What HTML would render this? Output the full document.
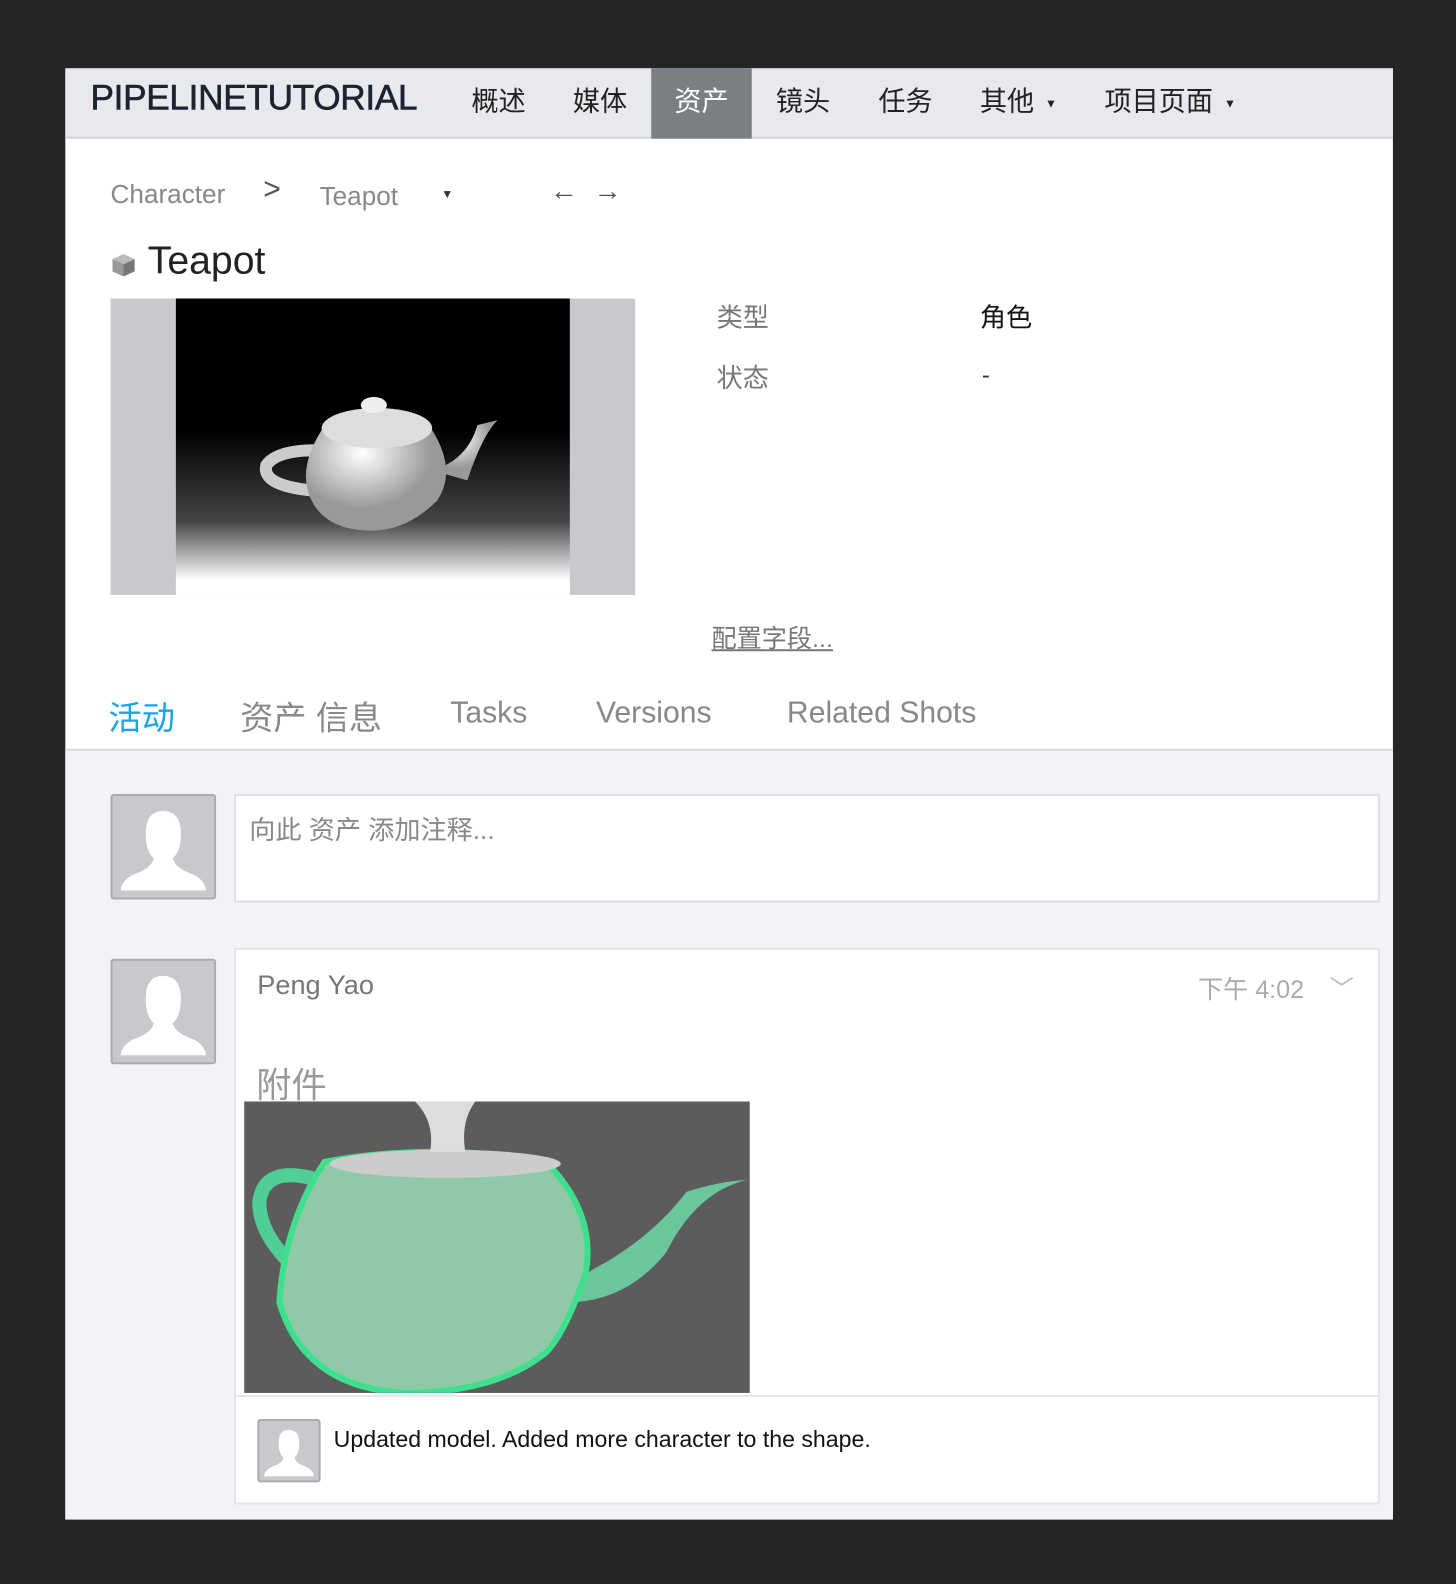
<!DOCTYPE html>
<html><head><meta charset="utf-8">
<style>
*{margin:0;padding:0;box-sizing:border-box}
body{width:1456px;height:1576px;background:#262626;font-family:"Liberation Sans","Noto Sans CJK SC",sans-serif;position:relative;overflow:hidden}
#wrap{position:absolute;left:0;top:0;width:1456px;height:1576px;transform:scale(1.005);transform-origin:0 0}
.a{position:absolute}
#panel{left:65px;top:68px;width:1321px;height:1444px;background:#fff}
.nav{left:0;top:0;width:1321px;height:70px;background:#e8e9ec;border-bottom:2px solid #cfd1d4}
.nav span{position:absolute;top:11px;font-size:27px;color:#222}
.av{background:#c8c9cc;border:2px solid #a9abaf;border-radius:3px;overflow:hidden}
</style></head><body><div id="wrap">
<div id="panel" class="a">
 <div class="a nav">
  <span style="left:25px;top:10px;font-size:35px;color:#1c2333;-webkit-text-stroke:0.6px #1c2333;letter-spacing:-0.3px">PIPELINETUTORIAL</span>
  <span style="left:404px">概述</span>
  <span style="left:505px">媒体</span>
  <div class="a" style="left:583px;top:0;width:100px;height:70px;background:#7b7e82"></div>
  <span style="left:606px;color:#fff">资产</span>
  <span style="left:707px">镜头</span>
  <span style="left:809px">任务</span>
  <span style="left:910px">其他 <small style="font-size:12px;vertical-align:middle">&nbsp;▼</small></span>
  <span style="left:1034px">项目页面 <small style="font-size:12px;vertical-align:middle">&nbsp;▼</small></span>
 </div>
 <div class="a" style="left:45px;top:110px;font-size:26px;color:#888">Character</div>
 <div class="a" style="left:197px;top:104px;font-size:30px;color:#555">&gt;</div>
 <div class="a" style="left:253px;top:112px;font-size:26px;color:#888">Teapot</div>
 <div class="a" style="left:374px;top:118px;font-size:12px;color:#333">▼</div>
 <div class="a" style="left:482px;top:106px;font-size:28px;color:#555;font-weight:bold">←&nbsp;&nbsp;→</div>
 <svg class="a" style="left:45px;top:183px" width="26" height="26" viewBox="0 0 26 26"><path d="M13 2L24 7V19L13 24L2 19V7Z" fill="#777"/><path d="M13 2L24 7L13 12L2 7Z" fill="#bbb"/><path d="M13 12V24L2 19V7Z" fill="#999"/></svg>
 <div class="a" style="left:82px;top:170px;font-size:39px;color:#222">Teapot</div>
 <div class="a" style="left:45px;top:229px;width:522px;height:295px;background:#c8c9cc"></div>
 <div class="a" style="left:110px;top:229px;width:392px;height:295px;background:linear-gradient(#000 0%,#000 45%,#444 75%,#fff 95%)"></div>
 <svg class="a" style="left:190px;top:320px" width="250" height="145" viewBox="0 0 250 145">
  <defs><radialGradient id="g" cx="0.4" cy="0.3"><stop offset="0" stop-color="#fff"/><stop offset="1" stop-color="#999"/></radialGradient></defs>
  <path d="M60 60Q20 60 10 75Q5 95 55 100" stroke="#ccc" stroke-width="12" fill="none"/>
  <path d="M175 80Q210 70 220 35L240 30Q225 45 210 90Z" fill="url(#g)"/>
  <path d="M65 40Q115 20 175 40Q200 80 180 110Q150 140 115 140Q70 140 55 110Q40 80 65 40Z" fill="url(#g)"/>
  <ellipse cx="120" cy="38" rx="55" ry="20" fill="#ddd"/>
  <ellipse cx="117" cy="15" rx="13" ry="8" fill="#eee"/>
 </svg>
 <div class="a" style="left:648px;top:228px;font-size:26px;color:#777">类型</div>
 <div class="a" style="left:910px;top:228px;font-size:26px;color:#111">角色</div>
 <div class="a" style="left:648px;top:288px;font-size:26px;color:#777">状态</div>
 <div class="a" style="left:912px;top:292px;font-size:24px;color:#333">-</div>
 <div class="a" style="left:643px;top:548px;font-size:25px;color:#777;text-decoration:underline">配置字段...</div>
 <div class="a" style="left:43px;top:620px;font-size:33px;color:#1aa3e8">活动</div>
 <div class="a" style="left:174px;top:620px;font-size:33px;color:#888">资产 信息</div>
 <div class="a" style="left:383px;top:625px;font-size:30px;color:#888">Tasks</div>
 <div class="a" style="left:528px;top:625px;font-size:30px;color:#888">Versions</div>
 <div class="a" style="left:718px;top:625px;font-size:30px;color:#888">Related Shots</div>
 <div class="a" style="left:0;top:677px;width:1321px;height:767px;background:#f2f3f6;border-top:2px solid #d6d8dc"></div>
 <div class="a av" style="left:45px;top:722px;width:105px;height:105px"><svg width="101" height="101" viewBox="0 0 101 101"><path d="M50 15Q68 15 68 38Q68 55 60 62Q62 72 80 78Q92 84 93 94H8Q9 84 21 78Q39 72 41 62Q33 55 33 38Q33 15 50 15Z" fill="#fff"/></svg></div>
 <div class="a" style="left:168px;top:722px;width:1140px;height:108px;background:#fff;border:2px solid #dcdee2"></div>
 <div class="a" style="left:183px;top:738px;font-size:26px;color:#888">向此 资产 添加注释...</div>
 <div class="a av" style="left:45px;top:886px;width:105px;height:105px"><svg width="101" height="101" viewBox="0 0 101 101"><path d="M50 15Q68 15 68 38Q68 55 60 62Q62 72 80 78Q92 84 93 94H8Q9 84 21 78Q39 72 41 62Q33 55 33 38Q33 15 50 15Z" fill="#fff"/></svg></div>
 <div class="a" style="left:168px;top:875px;width:1140px;height:554px;background:#fff;border:2px solid #e2e4e7"></div>
 <div class="a" style="left:191px;top:897px;font-size:27px;color:#777">Peng Yao</div>
 <div class="a" style="left:1127px;top:897px;font-size:25px;color:#aaa">下午 4:02</div>
 <div class="a" style="left:1258px;top:896px;font-size:24px;color:#bbb">﹀</div>
 <div class="a" style="left:190px;top:984px;font-size:35px;color:#999">附件</div>
 <div class="a" style="left:178px;top:1028px;width:503px;height:290px;background:#5c5c5c;overflow:hidden">
  <svg width="503" height="290" viewBox="0 0 503 290">
   <path d="M80 80Q20 60 15 100Q15 130 45 160" stroke="#4fcf95" stroke-width="14" fill="none"/>
   <path d="M320 200Q380 200 420 150Q450 90 500 78Q470 80 440 90Q410 130 360 160Q320 180 320 200Z" fill="#6bc79b"/>
   <path d="M80 60Q190 40 300 60Q350 110 340 170Q320 230 300 250Q250 290 160 290Q60 285 35 200Q40 120 80 60Z" fill="#8fc9a8" stroke="#3fe08d" stroke-width="6"/>
   <ellipse cx="200" cy="62" rx="115" ry="14" fill="#ccc"/>
   <path d="M170 0H230Q215 20 220 50H185Q190 20 170 0Z" fill="#ddd"/>
  </svg>
 </div>
 <div class="a" style="left:170px;top:1320px;width:1136px;height:2px;background:#e6e7ea"></div>
 <div class="a av" style="left:191px;top:1344px;width:63px;height:63px"><svg width="59" height="59" viewBox="0 0 101 101"><path d="M50 15Q68 15 68 38Q68 55 60 62Q62 72 80 78Q92 84 93 94H8Q9 84 21 78Q39 72 41 62Q33 55 33 38Q33 15 50 15Z" fill="#fff"/></svg></div>
 <div class="a" style="left:267px;top:1351px;font-size:23px;color:#111">Updated model. Added more character to the shape.</div>
</div>
</div></body></html>
